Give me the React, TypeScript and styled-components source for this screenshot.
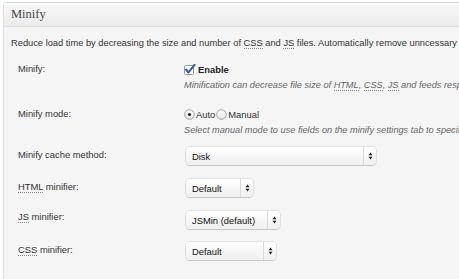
import React from "react";
import styled, { createGlobalStyle } from "styled-components";

const Global = createGlobalStyle`
  html, body { margin: 0; padding: 0; background: #ffffff; overflow: hidden; }
  body { font-family: "Liberation Sans", Arial, sans-serif; }
`;

const Panel = styled.div`
  margin: 2px 0 0 3px;
  width: 480px;
  height: 300px;
  border: 1px solid #dcdcdc;
  border-radius: 3px 0 0 0;
  background: #f5f5f5;
  box-sizing: border-box;
`;

const Header = styled.div`
  height: 23px;
  display: flex;
  align-items: center;
  padding-left: 7px;
  background: linear-gradient(#f9f9f9, #ececec);
  border-bottom: 1px solid #dfdfdf;
  font-family: "Liberation Serif", "Times New Roman", serif;
  font-size: 12.5px;
  color: #464646;
`;

const Body = styled.div`
  padding: 0 0 0 7px;
`;

const Intro = styled.p`
  margin: 8px 0 0 0;
  font-size: 9.3px;
  line-height: 16px;
  color: #333;
  white-space: nowrap;
`;

const Abbr = styled.abbr`
  text-decoration: none;
  border-bottom: 1px dotted #888;
`;

const Table = styled.div`
  margin-top: 10px;
  padding-left: 7px;
`;

const Row = styled.div<{ $h: number }>`
  display: grid;
  grid-template-columns: 166px 1fr;
  height: ${(p) => p.$h}px;
`;

const Label = styled.div<{ $lh: number }>`
  font-size: 9.4px;
  line-height: ${(p) => p.$lh}px;
  color: #333;
  white-space: nowrap;
`;

const Cell = styled.div`
  display: flex;
  flex-direction: column;
  white-space: nowrap;
`;

const Line = styled.div`
  display: flex;
  align-items: center;
  height: 16px;
  font-size: 9.4px;
  color: #222;
`;

const Desc = styled.div`
  font-size: 9.2px;
  font-style: italic;
  line-height: 16px;
  color: #666;
`;

const CheckLabel = styled.span`
  font-weight: bold;
  margin-left: 2px;
  color: #222;
`;

const RadioLabel = styled.span`
  margin: 0 1px 0 1px;
  color: #333;
`;

const SelectBox = styled.div<{ $w: number }>`
  width: ${(p) => p.$w}px;
  height: 18px;
  margin-left: 2px;
  box-sizing: border-box;
  display: flex;
  border-radius: 4px;
  background: linear-gradient(#ffffff, #efefef);
  box-shadow: 0 0 0 1px rgba(0, 0, 0, 0.07), 0 1px 1px rgba(0, 0, 0, 0.13);
  font-size: 9.4px;
  color: #111;
`;

const SelectText = styled.div`
  flex: 1;
  display: flex;
  align-items: center;
  padding-left: 6px;
  border-right: 1px solid #dadada;
`;

const SelectArrow = styled.div`
  width: 12px;
  display: flex;
  align-items: center;
  justify-content: center;
`;

const Checkbox = () => (
  <svg width="12" height="11" viewBox="0 0 12 11">
    <rect x="0.5" y="1.5" width="9" height="9" rx="1" fill="#fff" stroke="#9a9a9a" />
    <path d="M2 5.5 L4.5 8.5 L10.5 0.8" fill="none" stroke="#2d55b4" strokeWidth="2" strokeLinecap="round" strokeLinejoin="round" />
  </svg>
);

const Radio = ({ on }: { on?: boolean }) => (
  <svg width="11" height="11" viewBox="0 0 11 11">
    <defs>
      <linearGradient id="rg" x1="0" y1="0" x2="0" y2="1">
        <stop offset="0" stopColor="#ffffff" />
        <stop offset="1" stopColor="#e4e4e4" />
      </linearGradient>
    </defs>
    <circle cx="5.5" cy="5.5" r="4.8" fill="url(#rg)" stroke="#8e8e8e" strokeWidth="0.8" />
    {on && <circle cx="5.5" cy="5.5" r="1.6" fill="#222" />}
  </svg>
);

const Arrows = () => (
  <svg width="5" height="8" viewBox="0 0 5 8">
    <path d="M2.5 0.5 L4.5 3.2 L0.5 3.2 Z" fill="#222" />
    <path d="M2.5 7.5 L4.5 4.8 L0.5 4.8 Z" fill="#222" />
  </svg>
);

const Select = ({ value, w }: { value: string; w: number }) => (
  <SelectBox $w={w}>
    <SelectText>{value}</SelectText>
    <SelectArrow>
      <Arrows />
    </SelectArrow>
  </SelectBox>
);

export default function App() {
  return (
    <>
      <Global />
      <Panel>
        <Header>Minify</Header>
        <Body>
          <Intro>
            Reduce load time by decreasing the size and number of <Abbr>CSS</Abbr> and <Abbr>JS</Abbr> files.
            Automatically remove unncessary data from <Abbr>CSS</Abbr>, <Abbr>JS</Abbr>, feed, page and post <Abbr>HTML</Abbr>.
          </Intro>
          <Table>
            <Row $h={45}>
              <Label $lh={16}>Minify:</Label>
              <Cell>
                <Line>
                  <Checkbox />
                  <CheckLabel>Enable</CheckLabel>
                </Line>
                <Desc>
                  Minification can decrease file size of <Abbr>HTML</Abbr>, <Abbr>CSS</Abbr>, <Abbr>JS</Abbr> and feeds respectively by ~10% on average.
                </Desc>
              </Cell>
            </Row>
            <Row $h={41}>
              <Label $lh={16}>Minify mode:</Label>
              <Cell>
                <Line>
                  <Radio on />
                  <RadioLabel>Auto</RadioLabel>
                  <Radio />
                  <RadioLabel>Manual</RadioLabel>
                </Line>
                <Desc>Select manual mode to use fields on the minify settings tab to specify files to be minified.</Desc>
              </Cell>
            </Row>
            <Row $h={32}>
              <Label $lh={16}>Minify cache method:</Label>
              <Cell>
                <Select value="Disk" w={190} />
              </Cell>
            </Row>
            <Row $h={32}>
              <Label $lh={16}>
                <Abbr>HTML</Abbr> minifier:
              </Label>
              <Cell>
                <Select value="Default" w={67} />
              </Cell>
            </Row>
            <Row $h={31}>
              <Label $lh={12}>
                <Abbr>JS</Abbr> minifier:
              </Label>
              <Cell>
                <Select value="JSMin (default)" w={94} />
              </Cell>
            </Row>
            <Row $h={31}>
              <Label $lh={16}>
                <Abbr>CSS</Abbr> minifier:
              </Label>
              <Cell>
                <Select value="Default" w={90} />
              </Cell>
            </Row>
          </Table>
        </Body>
      </Panel>
    </>
  );
}
